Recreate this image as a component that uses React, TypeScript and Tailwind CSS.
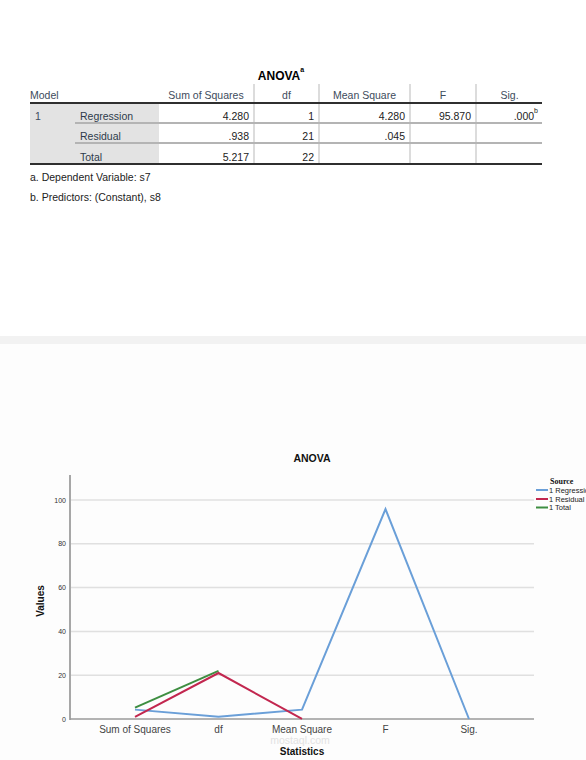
import React from "react";

const font = { fontFamily: '"Liberation Sans", Arial, sans-serif' };

const rowCols = "grid grid-cols-[84px_94px_65px_91px_66px_67px]";

const rows = [
  { label: "Regression", ss: "4.280", df: "1", ms: "4.280", f: "95.870", sig: ".000", sup: "b" },
  { label: "Residual", ss: ".938", df: "21", ms: ".045", f: "", sig: "" },
  { label: "Total", ss: "5.217", df: "22", ms: "", f: "", sig: "" },
];

// chart scale
const cats = [135, 218.5, 302, 385.5, 469];
const y = (v: number) => 719 - v * 2.19;
const pts = (vals: number[]) => vals.map((v, i) => `${cats[i]},${y(v)}`).join(" ");

function AnovaTable() {
  return (
    <div className="ml-[30px] w-[512px] text-[10.5px] text-[#222]">
      {/* Title */}
      <div className="h-[14px] pr-[10px] text-center text-[12px] font-bold leading-[14px] text-black">
        <span>
          ANOVA<sup className="align-[5px] text-[7px]">a</sup>
        </span>
      </div>

      {/* Header */}
      <div className="mt-[1px] grid h-[20px] grid-cols-[45px_84px_94px_65px_91px_66px_67px] border-b-2 border-[#2f2f2f] leading-[12px] text-[#3d4b5c]">
        <div className="col-span-2 flex items-end pb-[1px]">Model</div>
        <div className="flex items-end justify-center pb-[1px]">Sum of Squares</div>
        <div className="flex items-end justify-center border-l-2 border-[#dcdcdc] pb-[1px]">df</div>
        <div className="flex items-end justify-center border-l-2 border-[#dcdcdc] pb-[1px]">Mean Square</div>
        <div className="flex items-end justify-center border-l-2 border-[#dcdcdc] pb-[1px]">F</div>
        <div className="flex items-end justify-center border-l-2 border-[#dcdcdc] pb-[1px]">Sig.</div>
      </div>

      {/* Body */}
      <div className="flex border-b-2 border-[#2f2f2f] leading-[12px]">
        <div className="w-[45px] bg-[#e3e3e3] pl-[5px] pt-[6px] text-[#3d4b5c]">1</div>
        <div className="flex flex-col">
          {rows.map((r, i) => (
            <div
              key={r.label}
              className={`${rowCols} ${i < 2 ? "h-[20px] border-b-2 border-[#b4b4b4]" : "h-[19px]"}`}
            >
              <div className="flex items-end bg-[#e3e3e3] pl-[5px] text-[#2e3b4b]">{r.label}</div>
              <div className="flex items-end justify-end pr-[4px]">{r.ss}</div>
              <div className="flex items-end justify-end border-l-2 border-[#dcdcdc] pr-[4px]">{r.df}</div>
              <div className="flex items-end justify-end border-l-2 border-[#dcdcdc] pr-[4px]">{r.ms}</div>
              <div className="flex items-end justify-end border-l-2 border-[#dcdcdc] pr-[4px]">{r.f}</div>
              <div className="flex items-end justify-end border-l-2 border-[#dcdcdc] pr-[4px]">
                <span>
                  {r.sig}
                  {r.sup && <sup className="align-[4px] text-[7px]">{r.sup}</sup>}
                </span>
              </div>
            </div>
          ))}
        </div>
      </div>

      {/* Footnotes */}
      <div className="mt-[2px] leading-[20px] text-[#222]">
        <p>a. Dependent Variable: s7</p>
        <p>b. Predictors: (Constant), s8</p>
      </div>
    </div>
  );
}

function AnovaChart() {
  const grid = [20, 40, 60, 80, 100];
  return (
    <svg
      width={586}
      height={416}
      viewBox="0 344 586 416"
      className="block"
      style={{ fontFamily: '"Liberation Sans", Arial, sans-serif' }}
    >
      <text x={312} y={462} textAnchor="middle" fontSize={10.5} fontWeight="bold" fill="#111">
        ANOVA
      </text>

      {/* gridlines */}
      {grid.map((g) => (
        <line key={g} x1={71} x2={534} y1={y(g)} y2={y(g)} stroke="#e0e0e0" strokeWidth={1.5} />
      ))}
      {[0, ...grid].map((g) => (
        <text key={g} x={66} y={y(g) + 2.5} textAnchor="end" fontSize={7} fill="#333">
          {g}
        </text>
      ))}

      {/* axes */}
      <line x1={70} x2={70} y1={475} y2={720} stroke="#8a8a8a" strokeWidth={1.5} />
      <line x1={70} x2={534} y1={719} y2={719} stroke="#9a9a9a" strokeWidth={1.5} />

      <text
        x={44}
        y={601}
        transform="rotate(-90 44 601)"
        textAnchor="middle"
        fontSize={10}
        fontWeight="bold"
        fill="#111"
      >
        Values
      </text>

      {/* watermark */}
      <text x={300} y={744} textAnchor="middle" fontSize={10.5} fill="#e2e2e2">
        mostaql.com
      </text>

      {["Sum of Squares", "df", "Mean Square", "F", "Sig."].map((c, i) => (
        <text key={c} x={cats[i]} y={733} textAnchor="middle" fontSize={10} fill="#444">
          {c}
        </text>
      ))}
      <text x={302} y={755} textAnchor="middle" fontSize={10} fontWeight="bold" fill="#111">
        Statistics
      </text>

      {/* series */}
      <polyline points={pts([4.28, 1, 4.28, 95.87, 0])} fill="none" stroke="#6a9fd8" strokeWidth={2} />
      <polyline points={pts([5.217, 22])} fill="none" stroke="#3e8e41" strokeWidth={2} />
      <polyline points={pts([0.938, 21, 0.045])} fill="none" stroke="#c2274f" strokeWidth={2} />

      {/* legend */}
      <text
        x={550}
        y={484}
        fontSize={8}
        fontWeight="bold"
        fill="#111"
        style={{ fontFamily: '"Liberation Serif", "Times New Roman", serif' }}
      >
        Source
      </text>
      {[
        ["1 Regression", "#6a9fd8", 490],
        ["1 Residual", "#c2274f", 499],
        ["1 Total", "#3e8e41", 507.5],
      ].map(([label, color, ly]) => (
        <g key={label as string}>
          <line x1={536} x2={548} y1={ly as number} y2={ly as number} stroke={color as string} strokeWidth={2} />
          <text x={549} y={(ly as number) + 2.5} fontSize={7.5} fill="#222">
            {label}
          </text>
        </g>
      ))}
    </svg>
  );
}

export default function App() {
  return (
    <div className="min-h-[760px] w-[586px] bg-white" style={font}>
      <div className="pt-[69px]">
        <AnovaTable />
      </div>
      <div className="mt-[129px] h-[8px] bg-[#f2f2f2]" />
      <div className="bg-[#fdfdfd]">
        <AnovaChart />
      </div>
    </div>
  );
}
